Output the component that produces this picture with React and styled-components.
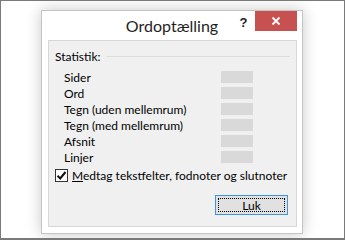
import React from "react";
import styled, { createGlobalStyle } from "styled-components";

const GlobalStyle = createGlobalStyle`
  html, body {
    margin: 0;
    padding: 0;
    background: #ffffff;
  }
  body {
    font-family: Lato, "Noto Sans", sans-serif;
  }
`;

const rows = [
  "Sider",
  "Ord",
  "Tegn (uden mellemrum)",
  "Tegn (med mellemrum)",
  "Afsnit",
  "Linjer",
];

export default function App() {
  return (
    <>
      <GlobalStyle />
      <Frame>
        <Dialog>
          <TitleBar>
            <span />
            <Title>Ordoptælling</Title>
            <Controls>
              <Help>?</Help>
              <CloseButton aria-label="Luk">
                <svg width="10" height="10" viewBox="0 0 10 10">
                  <path
                    d="M1.5 1.5 L8.5 8.5 M8.5 1.5 L1.5 8.5"
                    stroke="#fff"
                    strokeWidth="1.8"
                  />
                </svg>
              </CloseButton>
            </Controls>
          </TitleBar>
          <Panel>
            <GroupHead>
              <GroupLabel>Statistik:</GroupLabel>
              <GroupLine />
            </GroupHead>
            <StatList>
              {rows.map((r) => (
                <StatRow key={r}>
                  <StatLabel>{r}</StatLabel>
                  <StatValue />
                </StatRow>
              ))}
            </StatList>
            <CheckRow>
              <CheckBox>
                <svg width="11" height="11" viewBox="0 0 11 11">
                  <path
                    d="M1.5 5.8 L4.2 8.5 L9.5 2"
                    fill="none"
                    stroke="#111"
                    strokeWidth="2"
                  />
                </svg>
              </CheckBox>
              <CheckText>
                <u>M</u>edtag tekstfelter, fodnoter og slutnoter
              </CheckText>
            </CheckRow>
            <ButtonRow>
              <PushButton>
                <FocusRing>Luk</FocusRing>
              </PushButton>
            </ButtonRow>
          </Panel>
        </Dialog>
      </Frame>
    </>
  );
}

const Frame = styled.div`
  box-sizing: border-box;
  width: 345px;
  height: 240px;
  border: 1px solid #7a7a7a;
  border-bottom-width: 2px;
  background: #ffffff;
  padding: 9px 0 0 40px;
  overflow: hidden;
`;

const Dialog = styled.div`
  box-sizing: border-box;
  width: 262px;
  height: 224px;
  background: #ffffff;
  border: 1px solid #c4c4c4;
  box-shadow: 0 0 14px rgba(0, 0, 0, 0.22);
  display: flex;
  flex-direction: column;
`;

const TitleBar = styled.div`
  display: grid;
  grid-template-columns: 68px 1fr 68px;
  align-items: start;
  height: 29px;
`;

const Title = styled.div`
  font-family: Lato, "Open Sans", sans-serif;
  font-size: 16px;
  color: #1e1e1e;
  text-align: center;
  padding-top: 5px;
  white-space: nowrap;
`;

const Controls = styled.div`
  display: flex;
  justify-content: flex-end;
  align-items: flex-start;
  padding-right: 5px;
`;

const Help = styled.span`
  font-family: "Liberation Sans", sans-serif;
  font-weight: bold;
  font-size: 13px;
  color: #222;
  width: 20px;
  text-align: center;
  padding-top: 4px;
  margin-right: 2px;
`;

const CloseButton = styled.div`
  width: 45px;
  height: 20px;
  background: #c75050;
  display: flex;
  align-items: center;
  justify-content: center;
`;

const Panel = styled.div`
  box-sizing: border-box;
  flex: 1;
  margin: 0 5px 6px 6px;
  background: #f0f0f0;
  border: 1px solid #d7d7d7;
  padding: 7px 6px 0 6px;
  display: flex;
  flex-direction: column;
  font-size: 12px;
  color: #000;
`;

const GroupHead = styled.div`
  display: flex;
  align-items: center;
  height: 16px;
`;

const GroupLabel = styled.span`
  margin-right: 6px;
  white-space: nowrap;
`;

const GroupLine = styled.div`
  flex: 1;
  height: 1px;
  background: #dcdcdc;
`;

const StatList = styled.div`
  display: flex;
  flex-direction: column;
  padding: 5px 0 0 9px;
`;

const StatRow = styled.div`
  display: grid;
  grid-template-columns: 157px 32px;
  align-items: center;
  height: 16px;
`;

const StatLabel = styled.span`
  white-space: nowrap;
`;

const StatValue = styled.div`
  height: 12px;
  background: #d9d9d9;
`;

const CheckRow = styled.div`
  display: flex;
  align-items: center;
  gap: 4px;
  margin-top: 2px;
  height: 16px;
`;

const CheckBox = styled.div`
  box-sizing: border-box;
  width: 13px;
  height: 13px;
  border: 1px solid #333;
  background: #fff;
  display: flex;
  align-items: center;
  justify-content: center;
`;

const CheckText = styled.span`
  white-space: nowrap;
  u {
    text-decoration-thickness: 1px;
  }
`;

const ButtonRow = styled.div`
  display: flex;
  justify-content: flex-end;
  padding-right: 2px;
  margin-top: 12px;
`;

const PushButton = styled.div`
  box-sizing: border-box;
  width: 73px;
  height: 20px;
  border: 1px solid #3c96e6;
  background: #e1e1e1;
  padding: 2px;
`;

const FocusRing = styled.div`
  box-sizing: border-box;
  height: 100%;
  border: 1px dotted #000;
  display: flex;
  align-items: center;
  justify-content: center;
  font-size: 12px;
`;
